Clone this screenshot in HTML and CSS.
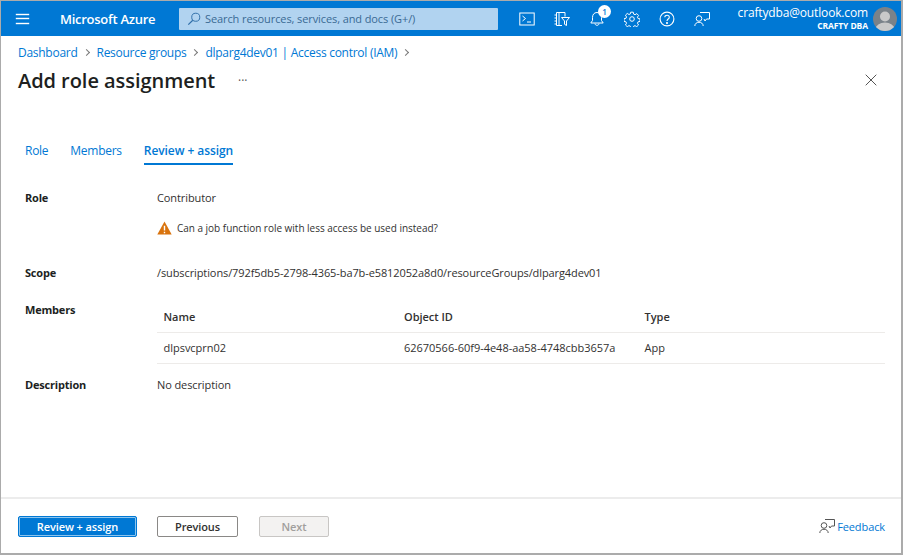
FILE: index.html
```html
<!DOCTYPE html>
<html lang="en">
<head>
<meta charset="utf-8">
<title>Add role assignment</title>
<link rel="stylesheet" href="styles.css">
</head>
<body>
<div class="frame">
  <header class="topbar">
    <button class="menu" aria-label="Menu"><span></span><span></span><span></span></button>
    <div class="brand">Microsoft Azure</div>
    <div class="search">
      <svg class="search-icon" viewBox="0 0 16 16" width="14" height="14"><circle cx="10" cy="6" r="4.6" fill="none" stroke="#2f6ea8" stroke-width="1.1"/><path d="M6.6 9.4 1.5 14.5" stroke="#2f6ea8" stroke-width="1.3" fill="none"/></svg>
      <span>Search resources, services, and docs (G+/)</span>
    </div>
    <nav class="tools">
      <span class="tool"><svg viewBox="0 0 16 16" width="16" height="16" fill="none" stroke="#fff" stroke-width="1"><rect x=".8" y="2" width="14.4" height="12" /><path d="M3.5 5l3 2.500-3 2.500M8 11h4"/></svg></span>
      <span class="tool"><svg viewBox="0 0 16 16" width="16" height="16" fill="none" stroke="#fff" stroke-width="1"><path d="M2.500 1.500h8.500v4M2.500 1.500v13h5.500M2.500 4h-2M2.500 7h-2M2.500 10h-2M2.500 13h-2M5 1.500v13"/><path d="M7.500 6.500h8l-3 3.500v4.500l-2-1.200v-3.300z"/></svg></span>
      <span class="tool notif"><svg viewBox="0 0 16 16" width="16" height="16" fill="none" stroke="#fff" stroke-width="1"><path d="M8 1.500c-3 0-4.500 2.200-4.500 5v3L1.800 12h12.400l-1.700-2.500v-3c0-2.800-1.500-5-4.500-5zM6 12.500c0 2.400 4 2.400 4 0"/></svg><b class="badge">1</b></span>
      <span class="tool"><svg viewBox="0 0 16 16" width="16" height="16" fill="none" stroke="#fff" stroke-width="1"><circle cx="8" cy="8" r="2.300"/><path d="M6.700 1h2.600l.4 2 1.400.6 1.800-1.100 1.800 1.800-1.100 1.800.6 1.400 2 .4v2.600l-2 .4-.6 1.400 1.100 1.800-1.800 1.800-1.800-1.100-1.400.6-.4 2H6.700l-.4-2-1.400-.6-1.800 1.100-1.800-1.800 1.100-1.800-.6-1.400-2-.4V7.700l2-.4.6-1.400-1.100-1.800 1.800-1.800 1.800 1.100 1.400-.6z" transform="translate(.2 .2) scale(.975)"/></svg></span>
      <span class="tool"><svg viewBox="0 0 16 16" width="16" height="16" fill="none" stroke="#fff" stroke-width="1.100"><circle cx="8" cy="8" r="6.900"/><path d="M5.800 6.200C5.800 3.500 10.300 3.600 10.300 6.200c0 1.800-2.300 1.900-2.300 3.800"/><circle cx="8" cy="12" r=".5" fill="#fff"/></svg></span>
      <span class="tool"><svg viewBox="0 0 16 16" width="16" height="16" fill="none" stroke="#fff" stroke-width="1"><path d="M6 1.500h9.500v6.500h-3l-1.500 2-1-2"/><circle cx="5" cy="7.500" r="2.800"/><path d="M.8 15c0-5 8.400-5 8.400 0"/></svg></span>
    </nav>
    <div class="account">
      <div class="email">craftydba@outlook.com</div>
      <div class="tenant">CRAFTY DBA</div>
    </div>
    <svg class="avatar" viewBox="0 0 24 24" width="24" height="24"><defs><clipPath id="av"><circle cx="12" cy="12" r="12"/></clipPath></defs><circle cx="12" cy="12" r="12" fill="#7a8289"/><g clip-path="url(#av)" fill="#c9c9c9"><circle cx="12" cy="9.500" r="5"/><ellipse cx="12" cy="22" rx="9.500" ry="6.500"/></g></svg>
  </header>

  <main class="content">
    <div class="crumbs">
      <a>Dashboard</a><i class="sep"></i><a>Resource groups</a><i class="sep"></i><a>dlparg4dev01 | Access control (IAM)</a><i class="sep"></i>
    </div>
    <div class="title-row">
      <h1>Add role assignment</h1>
      <span class="more">···</span>
      <svg class="close" viewBox="0 0 12 12" width="12" height="12"><path d="M.7.700l10.600 10.600M11.300.700.700 11.300" stroke="#555" stroke-width="1" fill="none"/></svg>
    </div>
    <div class="tabs">
      <a class="tab">Role</a>
      <a class="tab">Members</a>
      <a class="tab active">Review + assign</a>
    </div>

    <div class="details">
      <div class="row row-role">
        <div class="label">Role</div>
        <div class="value">
          <div>Contributor</div>
          <div class="warning">
            <svg viewBox="0 0 16 15" width="15" height="14"><path d="M8 .500 15.700 14.500H.3z" fill="#d9730d"/><path d="M8 5v5.300M8 11.500v1.500" stroke="#fff" stroke-width="1.500"/></svg>
            <span>Can a job function role with less access be used instead?</span>
          </div>
        </div>
      </div>
      <div class="row row-scope">
        <div class="label">Scope</div>
        <div class="value">/subscriptions/792f5db5-2798-4365-ba7b-e5812052a8d0/resourceGroups/dlparg4dev01</div>
      </div>
      <div class="row row-members">
        <div class="label">Members</div>
        <div class="value members">
          <div class="tr th"><span>Name</span><span>Object ID</span><span>Type</span></div>
          <div class="tr"><span>dlpsvcprn02</span><span>62670566-60f9-4e48-aa58-4748cbb3657a</span><span>App</span></div>
        </div>
      </div>
      <div class="row row-desc">
        <div class="label">Description</div>
        <div class="value">No description</div>
      </div>
    </div>
  </main>

  <footer class="footer">
    <button class="btn primary">Review + assign</button>
    <button class="btn secondary">Previous</button>
    <button class="btn disabled">Next</button>
    <a class="feedback">
      <svg viewBox="0 0 16 16" width="16" height="16" fill="none" stroke="#555" stroke-width="1"><path d="M6 1.500h9.500v6.500h-3l-1.500 2-1-2"/><circle cx="5" cy="7.500" r="2.800"/><path d="M.8 15c0-5 8.400-5 8.400 0"/></svg>
      <span>Feedback</span>
    </a>
  </footer>
</div>
</body>
</html>
```

FILE: styles.css
```css
* { box-sizing: border-box; }
html, body { margin: 0; padding: 0; height: 100%; }
body { font-family: "Open Sans", "Noto Sans", "Liberation Sans", sans-serif; font-size: 11px; color: #323130; background: #fff; }

.frame { width: 903px; height: 555px; border: 1px solid #ababab; border-width: 1px 2px 2px 1px; display: flex; flex-direction: column; overflow: hidden; }

.topbar { height: 35px; background: #0078d4; display: flex; align-items: center; color: #fff; flex: none; }
.menu { width: 13px; height: 10px; margin-left: 15px; padding: 0; border: 0; background: none; display: flex; flex-direction: column; justify-content: space-between; }
.menu span { display: block; height: 1px; background: #fff; box-shadow: 0 0 0 .2px #fff; }
.brand { margin-left: 31px; width: 119px; font-size: 13px; font-weight: 600; letter-spacing: -.27px; white-space: nowrap; }
.search { width: 319px; height: 22px; background: #b1d3f0; border-radius: 1px; display: flex; align-items: center; padding-left: 8px; color: #3a6a94; font-size: 11px; letter-spacing: -.1px; }
.search-icon { margin-right: 4px; flex: none; }
.tools { display: flex; margin-left: 11px; }
.tool { width: 35px; height: 35px; display: flex; align-items: center; justify-content: center; position: relative; }
.badge { position: absolute; top: 4px; left: 19px; width: 13px; height: 13px; border-radius: 50%; background: #fff; color: #0078d4; font-size: 8px; font-weight: 600; line-height: 13px; text-align: center; }
.account { margin-left: auto; text-align: right; line-height: 1; }
.email { font-size: 12px; letter-spacing: -.15px; }
.tenant { font-size: 8.500px; font-weight: 700; margin-top: 3px; letter-spacing: -.1px; }
.avatar { margin: 0 4px 0 5px; flex: none; }

.content { flex: 1; min-height: 0; }
.crumbs { display: flex; align-items: center; padding: 3px 0 0 17px; height: 29px; font-size: 12px; color: #0078d4; letter-spacing: -.27px; }
.crumbs a { color: #0078d4; }
.sep { width: 5px; height: 5px; border-top: 1px solid #777; border-right: 1px solid #777; transform: rotate(45deg); margin: 0 8px 0 6px; }
.title-row { display: flex; align-items: center; height: 30px; padding-left: 17px; }
h1 { margin: 0; font-size: 20px; font-weight: 600; color: #201f1e; letter-spacing: -.05px; white-space: nowrap; width: 220px; }
.more { font-size: 12px; color: #555; letter-spacing: 0; }
.close { margin-left: auto; margin-right: 24px; }

.tabs { display: flex; padding: 47px 0 0 24px; font-size: 12px; }
.tab { color: #0078d4; letter-spacing: -.27px; padding-bottom: 3px; margin-right: 22px; line-height: 18px; border-bottom: 2px solid transparent; }
.tab.active { font-weight: 600; border-bottom-color: #0078d4; letter-spacing: -.07px; }

.details { padding: 21px 0 0 24px; }
.row { display: flex; }
.label { width: 132px; flex: none; font-weight: 700; letter-spacing: -.2px; color: #201f1e; line-height: 16px; }
.value { flex: 1; line-height: 16px; letter-spacing: -.1px; min-width: 0; }
.row-role { height: 76px; padding-top: 4px; }
.warning { display: flex; align-items: center; gap: 5px; margin-top: 14px; font-size: 10px; letter-spacing: -.02px; }
.row-scope { height: 40px; padding-top: 3px; }
.row-members { height: 75px; }
.row-desc { height: 20px; }

.members { margin-right: 16px; letter-spacing: -.02px; }
.tr { display: grid; grid-template-columns: 240.500px 240.500px 1fr; padding-left: 6.500px; height: 31px; align-items: center; border-bottom: 1px solid #edebe9; }
.tr.th { font-weight: 600; color: #323130; }

.footer { flex: none; height: 56px; border-top: 2px solid #ececec; display: flex; align-items: center; padding: 0 16px 0 17px; margin-top: 0; }
.btn { font-family: inherit; height: 21px; font-size: 11px; font-weight: 600; border-radius: 2px; padding: 0; text-align: center; letter-spacing: -.1px; }
.primary { width: 119px; background: #0078d4; color: #fff; border: 1px solid #0078d4; outline: 1px solid #8cc4ee; outline-offset: -2px; }
.secondary { width: 81px; margin-left: 20px; background: #fff; color: #323130; border: 1px solid #8a8886; }
.disabled { width: 70px; margin-left: 21px; background: #f3f2f1; color: #a19f9d; border: 1px solid #c8c6c4; }
.feedback { margin-left: auto; display: flex; align-items: center; gap: 2px; color: #0078d4; letter-spacing: -.1px; }
```
